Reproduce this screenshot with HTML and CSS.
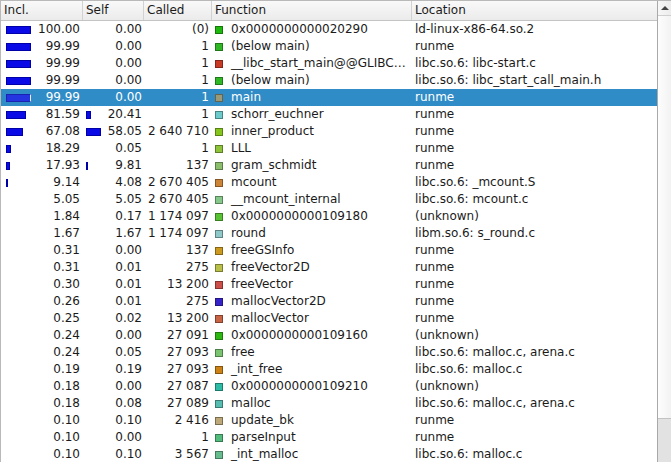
FILE: index.html
```html
<!DOCTYPE html>
<html>
<head>
<meta charset="utf-8">
<link rel="stylesheet" href="styles.css">
</head>
<body>
<div class="view">
  <div class="table">
    <div class="row head">
      <div class="hc">Incl.</div>
      <div class="hc">Self</div>
      <div class="hc">Called</div>
      <div class="hc">Function</div>
      <div class="hc last">Location</div>
    </div>
    <div id="rows"></div>
  </div>
  <div class="scrollbar">
    <div class="sb-btn"><span class="arrow"></span></div>
    <div class="sb-thumb"></div>
    <div class="sb-trough"></div>
  </div>
</div>
<script src="app.js"></script>
</body>
</html>
```
FILE: styles.css
```css
html, body { margin: 0; padding: 0; background: #ffffff; }
body {
  font-family: "DejaVu Sans", sans-serif;
  font-size: 12px;
  color: #1b1b1b;
  width: 671px;
  height: 462px;
  overflow: hidden;
}
.view {
  display: flex;
  height: 462px;
  box-sizing: border-box;
  border-top: 1px solid #b9b9b9;
  border-left: 1px solid #b9b9b9;
}
.table { flex: 1; overflow: hidden; }
.row {
  display: grid;
  grid-template-columns: 82px 61px 68px 200px 245px;
  height: 17px;
  line-height: 17px;
  white-space: nowrap;
}
.row.head {
  height: 20px;
  line-height: 19px;
  box-sizing: border-box;
  border-bottom: 1px solid #c4c4c4;
  background: linear-gradient(#f9f9f9, #ebebeb);
}
.hc {
  padding-left: 3px;
  border-right: 1px solid #d2d2d2;
}
.hc.last { border-right: none; }
.c { overflow: hidden; box-sizing: border-box; }
.num {
  display: flex;
  align-items: center;
  padding-right: 3px;
}
.num .v { margin-left: auto; }
.c.self { padding-right: 2px; }
.bar {
  height: 8px;
  box-sizing: border-box;
  background: #0a0ae6;
  border: 1px solid #0000a8;
  margin-left: 5px;
  flex: none;
}
.self .bar { margin-left: 3px; }
.fn {
  display: flex;
  align-items: center;
}
.sq {
  width: 8px;
  height: 8px;
  box-sizing: border-box;
  border: 1px solid rgba(0,0,0,0.35);
  margin-left: 3px;
  margin-right: 8px;
  flex: none;
}
.loc { padding-left: 3px; }
.row.sel { background: #308cc6; color: #ffffff; }
.row.sel .bar { background: #2434e0; border-color: #1a22b0; border-right: 1px solid #e8ecff; }
.scrollbar {
  width: 14px;
  box-sizing: border-box;
  border-left: 1px solid #a9a9a9;
  display: flex;
  flex-direction: column;
  background: #f4f4f4;
}
.sb-btn {
  height: 15px;
  box-sizing: border-box;
  border-bottom: 1px solid #cfcfcf;
  display: flex;
  align-items: center;
  justify-content: center;
  background: linear-gradient(90deg, #f7f7f7, #ececec);
}
.arrow {
  width: 0; height: 0;
  border-left: 4px solid transparent;
  border-right: 4px solid transparent;
  border-bottom: 4px solid #444;
}
.sb-thumb {
  height: 403px;
  box-sizing: border-box;
  border-bottom: 1px solid #c2c2c2;
  background: linear-gradient(90deg, #fdfdfd, #f2f2f2);
}
.sb-trough { flex: 1; background: #e2e2e2; }
```
FILE: app.js
```js
var data = [
  [100.00, "0.00", 0, "(0)", "0x0000000000020290", "ld-linux-x86-64.so.2", "#1fb80f"],
  [99.99, "0.00", 0, "1", "(below main)", "runme", "#2fb824"],
  [99.99, "0.00", 0, "1", "__libc_start_main@@GLIBC\u2026", "libc.so.6: libc-start.c", "#c93a24"],
  [99.99, "0.00", 0, "1", "(below main)", "libc.so.6: libc_start_call_main.h", "#2fb824"],
  [99.99, "0.00", 0, "1", "main", "runme", "#9a9a78", true],
  [81.59, "20.41", 20.41, "1", "schorr_euchner", "runme", "#6ccaca"],
  [67.08, "58.05", 58.05, "2 640 710", "inner_product", "runme", "#86c61c"],
  [18.29, "0.05", 0, "1", "LLL", "runme", "#8ec43a"],
  [17.93, "9.81", 9.81, "137", "gram_schmidt", "runme", "#8cbf6c"],
  [9.14, "4.08", 0, "2 670 405", "mcount", "libc.so.6: _mcount.S", "#cc8436"],
  [5.05, "5.05", 0, "2 670 405", "__mcount_internal", "libc.so.6: mcount.c", "#86c88a"],
  [1.84, "0.17", 0, "1 174 097", "0x0000000000109180", "(unknown)", "#58c232"],
  [1.67, "1.67", 0, "1 174 097", "round", "libm.so.6: s_round.c", "#8ec8c8"],
  [0.31, "0.00", 0, "137", "freeGSInfo", "runme", "#cc9a1e"],
  [0.31, "0.01", 0, "275", "freeVector2D", "runme", "#b8c04a"],
  [0.30, "0.01", 0, "13 200", "freeVector", "runme", "#cc4e48"],
  [0.26, "0.01", 0, "275", "mallocVector2D", "runme", "#3522c8"],
  [0.25, "0.02", 0, "13 200", "mallocVector", "runme", "#c86444"],
  [0.24, "0.00", 0, "27 091", "0x0000000000109160", "(unknown)", "#2cb810"],
  [0.24, "0.05", 0, "27 093", "free", "libc.so.6: malloc.c, arena.c", "#7ac470"],
  [0.19, "0.19", 0, "27 093", "_int_free", "libc.so.6: malloc.c", "#cc8214"],
  [0.18, "0.00", 0, "27 087", "0x0000000000109210", "(unknown)", "#2cbca6"],
  [0.18, "0.08", 0, "27 089", "malloc", "libc.so.6: malloc.c, arena.c", "#56bcb0"],
  [0.10, "0.10", 0, "2 416", "update_bk", "runme", "#bca878"],
  [0.10, "0.00", 0, "1", "parseInput", "runme", "#52bc7c"],
  [0.10, "0.10", 0, "3 567", "_int_malloc", "libc.so.6: malloc.c", "#66bc8c"]
];
var host = document.getElementById("rows");
data.forEach(function (d) {
  var row = document.createElement("div");
  row.className = "row" + (d[7] ? " sel" : "");
  var inclBar = d[0] >= 6 ? '<span class="bar" style="width:' + Math.max(2, Math.round(d[0] * 0.25)) + 'px"></span>' : '';
  var selfBar = d[2] >= 6 ? '<span class="bar" style="width:' + Math.max(2, Math.round(d[2] * 0.25)) + 'px"></span>' : '';
  row.innerHTML =
    '<div class="c num">' + inclBar + '<span class="v">' + d[0].toFixed(2) + '</span></div>' +
    '<div class="c num self">' + selfBar + '<span class="v">' + d[1] + '</span></div>' +
    '<div class="c num"><span class="v">' + d[3] + '</span></div>' +
    '<div class="c fn"><span class="sq" style="background:' + d[6] + '"></span><span>' + d[4] + '</span></div>' +
    '<div class="c loc">' + d[5] + '</div>';
  host.appendChild(row);
});
```
